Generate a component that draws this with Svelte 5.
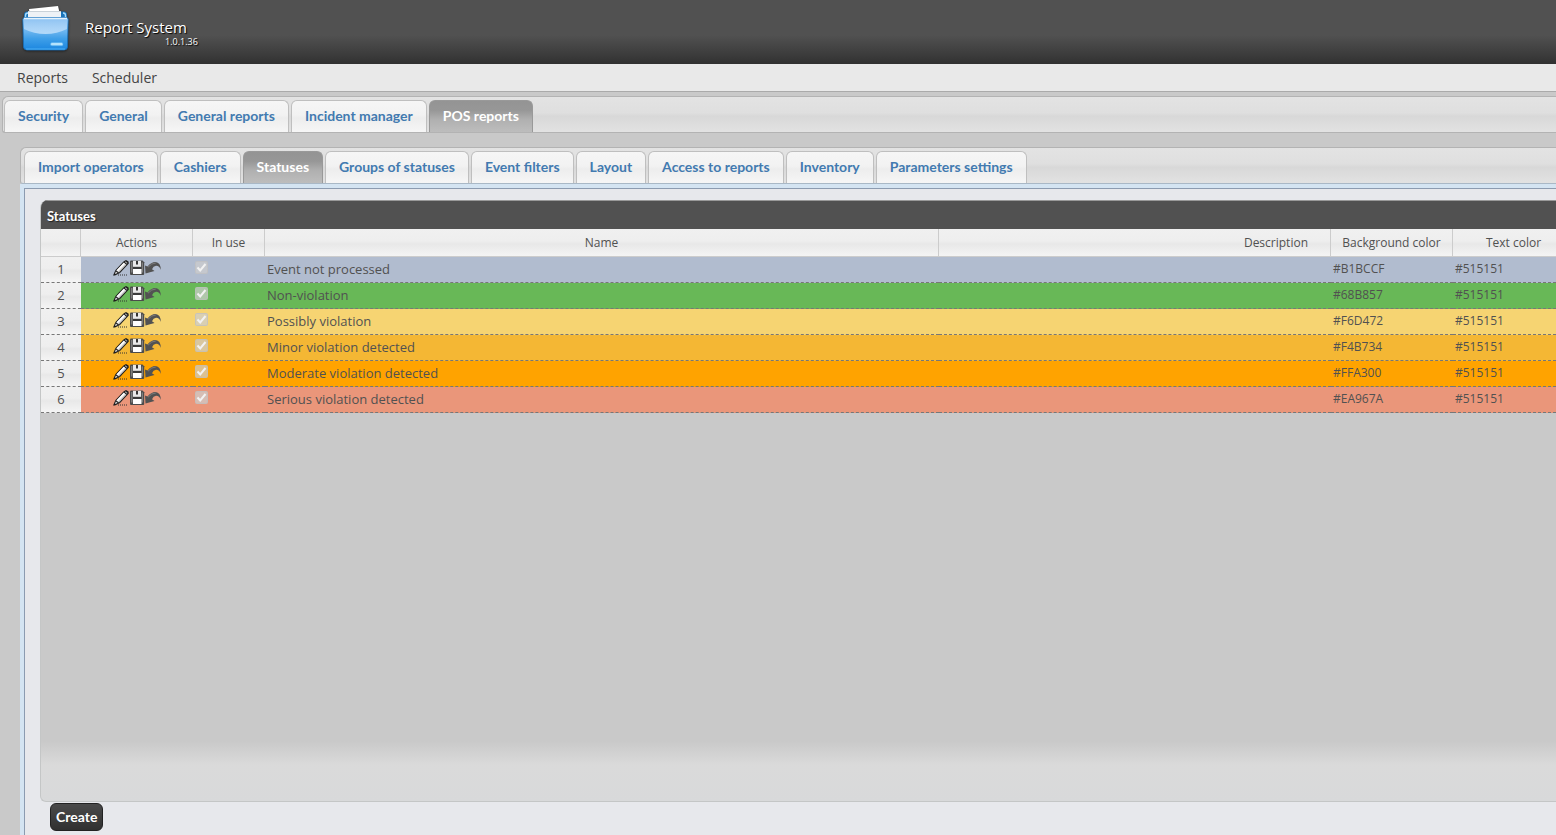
<script>
  const sections = ['Security', 'General', 'General reports', 'Incident manager', 'POS reports'];
  const pages = [
    'Import operators',
    'Cashiers',
    'Statuses',
    'Groups of statuses',
    'Event filters',
    'Layout',
    'Access to reports',
    'Inventory',
    'Parameters settings'
  ];
  let section = $state('POS reports');
  let page = $state('Statuses');

  const statuses = [
    { name: 'Event not processed', background: '#B1BCCF', text: '#515151' },
    { name: 'Non-violation', background: '#68B857', text: '#515151' },
    { name: 'Possibly violation', background: '#F6D472', text: '#515151' },
    { name: 'Minor violation detected', background: '#F4B734', text: '#515151' },
    { name: 'Moderate violation detected', background: '#FFA300', text: '#515151' },
    { name: 'Serious violation detected', background: '#EA967A', text: '#515151' }
  ];
</script>

<div class="app">
  <header>
    <svg class="logo" viewBox="0 0 50 48" aria-hidden="true">
      <defs>
        <linearGradient id="folder" x1="0" y1="0" x2="0" y2="1">
          <stop offset="0" stop-color="#9fcff7" />
          <stop offset="0.45" stop-color="#66b2ee" />
          <stop offset="0.65" stop-color="#3f9fe8" />
          <stop offset="1" stop-color="#1b86e0" />
        </linearGradient>
        <linearGradient id="gloss" x1="0" y1="0" x2="0" y2="1">
          <stop offset="0" stop-color="#8fc3f2" />
          <stop offset="1" stop-color="#c2e1fb" stop-opacity="0.85" />
        </linearGradient>
      </defs>
      <path d="M3 14V9q0-3.500 3-3.500H43q3 0 3 3.500v5z" fill="#1974ba" />
      <path d="M4.500 11V9.500q0-2.500 2.500-2.500M44.500 11V9.500q0-2.500-2.500-2.500" fill="none" stroke="#a6dafc" stroke-width="1.400" />
      <path d="M8 5 37 2 39 12H9z" fill="#cfd6db" />
      <path d="M8 3 37 0 39 9 9 12z" fill="#fff" />
      <path d="M7 5.500h33v8H7z" fill="#eef2f6" />
      <path d="M7 5.500h33" stroke="#c9d2d9" stroke-width="1" />
      <path d="M3.500 11.500H45.500Q47.200 11.500 47.200 13.500L46.500 41Q46.300 44 43 44H6Q2.800 44 2.500 41L1.800 13.500Q1.800 11.500 3.500 11.500z" fill="url(#folder)" stroke="#1670bd" stroke-width="0.800" />
      <path d="M2.800 13H46.200L45.900 23Q36 28 24.500 28T3 23z" fill="url(#gloss)" />
      <path d="M3 12.500H46" stroke="#e4f3fe" stroke-width="1.500" />
      <path d="M5 43H44" stroke="#4cb1f5" stroke-width="1.200" />
      <rect x="29.500" y="36.500" width="12.500" height="3.200" rx="1.500" fill="#b5e3fd" stroke="#49a9ee" stroke-width="0.600" />
    </svg>
    <div class="brand">
      <span class="title">Report System</span>
      <span class="version">1.0.1.36</span>
    </div>
  </header>

  <nav class="menu">
    <a href="#reports">Reports</a>
    <a href="#scheduler">Scheduler</a>
  </nav>

  <main>
    <div class="tabs outer" role="tablist">
      {#each sections as s}
        <button role="tab" class:active={s === section} aria-selected={s === section} onclick={() => (section = s)}>{s}</button>
      {/each}
    </div>

    <div class="workspace">
      <div class="tabs inner" role="tablist">
        {#each pages as p}
          <button role="tab" class:active={p === page} aria-selected={p === page} onclick={() => (page = p)}>{p}</button>
        {/each}
      </div>

      <div class="frame">
        <section class="panel">
          <div class="grid">
            <h2>Statuses</h2>
            <table>
              <colgroup>
                <col class="c-num" /><col class="c-act" /><col class="c-use" /><col class="c-name" /><col /><col class="c-bg" /><col class="c-text" />
              </colgroup>
              <thead>
                <tr>
                  <th></th>
                  <th>Actions</th>
                  <th>In use</th>
                  <th>Name</th>
                  <th class="desc">Description</th>
                  <th>Background color</th>
                  <th class="last">Text color</th>
                </tr>
              </thead>
              <tbody>
                {#each statuses as row, i}
                  <tr style="background-color: {row.background}; color: {row.text}">
                    <th scope="row">{i + 1}</th>
                    <td>
                      <div class="actions">
                        <button aria-label="Edit">
                          <svg viewBox="0 0 16 16">
                            <path d="M5 15h10" stroke="#333" stroke-dasharray="1 1" />
                            <path d="M0 15.500 2.500 10 10.500 1.500 13 0 15.500 1.500 15.800 3.500 7 13 2 15.500z" fill="#1c1c1c" />
                            <path d="M3.300 10.500 10.800 2.600 13.300 4.800 6 12.500z" fill="#e9e9e9" />
                            <path d="M4.200 10.600 11.200 3.400" stroke="#fff" stroke-width="1.200" />
                            <path d="M5.800 12 12.900 4.600" stroke="#8a8a8a" stroke-width="0.800" />
                            <path d="M12.200 1.700 14.200 3.400" stroke="#a8a8a8" stroke-width="1.200" />
                            <path d="M1.800 14 2.900 11.500 4.700 13z" fill="#e2e2e2" />
                          </svg>
                        </button>
                        <button aria-label="Save">
                          <svg viewBox="0 0 16 16">
                            <path d="M2 .5H13.500L15.200 2.200V14Q15.200 15 14.200 15H2Q1 15 1 14V1.500Q1 .5 2 .5z" fill="#4c4c4c" />
                            <path d="M2 2h1.500v10.500H2zM12.700 2.500h1.300v10h-1.300z" fill="#7e7e7e" />
                            <path d="M4 .8h8v6H4z" fill="#e9e9e9" />
                            <path d="M7 1h2v3.500H7z" fill="#333" />
                            <path d="M4 9h8.500v5H4z" fill="#fff" />
                            <path d="M4 8h8.500" stroke="#2a2a2a" />
                          </svg>
                        </button>
                        <button aria-label="Undo">
                          <svg viewBox="0 0 16 16">
                            <path d="M0 5.500 2.500 6.500Q6 2 10.500 2 15.800 2.600 15.800 10 14.300 5.600 11 5.800 8.200 6.200 7 9.200L9.500 11 .5 13.500z" fill="#525252" />
                            <path d="M3 7.200Q6.500 3 10.800 3" fill="none" stroke="#858585" stroke-width="0.800" />
                          </svg>
                        </button>
                      </div>
                    </td>
                    <td class="use">
                      <input type="checkbox" checked disabled aria-label="{row.name} in use" />
                    </td>
                    <td>{row.name}</td>
                    <td></td>
                    <td class="hex">{row.background}</td>
                    <td class="hex">{row.text}</td>
                  </tr>
                {/each}
              </tbody>
            </table>
          </div>
          <button class="create">Create</button>
        </section>
      </div>
    </div>
  </main>
</div>

<style>
  :global(body) {
    margin: 0;
    background: #c9c9c9;
  }
  .app {
    min-height: 100vh;
    display: flex;
    flex-direction: column;
    font: 13px/20px 'Open Sans', sans-serif;
    color: #515151;
    overflow: hidden;
  }
  button {
    font: inherit;
    margin: 0;
    cursor: pointer;
  }
  header {
    height: 64px;
    box-sizing: border-box;
    display: flex;
    align-items: flex-start;
    gap: 14px;
    padding: 6px 21px;
    background: linear-gradient(#515151 0, #515151 55%, #3a3a3a 88%, #303030 100%);
  }
  .logo {
    width: 50px;
    height: 48px;
    flex: none;
    filter: drop-shadow(0 1px 1px #222);
  }
  .brand {
    display: flex;
    flex-direction: column;
    color: #fff;
    text-shadow: 1px 1px 1px #000;
    padding-top: 11px;
  }
  .title {
    font-size: 15px;
    line-height: 20px;
  }
  .version {
    font-size: 9px;
    line-height: 10px;
    padding-left: 80px;
  }
  .menu {
    display: flex;
    gap: 24px;
    padding: 4px 17px 3px;
    background: #e9e9e9;
    border-bottom: 1px solid #aaa;
  }
  .menu a {
    font-size: 14px;
    line-height: 20px;
    color: #444;
    text-decoration: none;
  }
  main,
  .workspace {
    flex: 1;
    display: flex;
    flex-direction: column;
  }
  main {
    padding: 4px 0 0 2px;
  }
  .workspace {
    padding: 14px 0 0 18px;
  }
  .tabs {
    display: flex;
    gap: 2px;
    border: solid #b3b3b3;
    border-width: 1px 0 1px 1px;
    border-radius: 6px 0 0 3px;
    padding: 3px 0 0 1px;
    background: linear-gradient(#e3e3e3 0, #dfdfdf 45%, #d8d8d8 55%, #e2e2e2 100%);
  }
  .tabs.inner {
    padding-left: 3px;
    border-bottom-color: #a9b8c6;
  }
  .tabs button {
    font: bold 14px/20px Lato, sans-serif;
    color: #427ab0;
    padding: 5px 13px 6px;
    border: 1px solid #bfbfbf;
    border-bottom: 0;
    border-radius: 6px 6px 0 0;
    background: linear-gradient(#f6f6f6 0, #f2f2f2 45%, #ededed 55%, #f6f6f6 100%);
    white-space: nowrap;
  }
  .tabs button.active {
    color: #fff;
    border-color: #999;
    background: linear-gradient(#949494 0, #979797 30%, #b0b0b0 60%, #bdbdbd 100%);
  }
  .frame {
    flex: 1;
    display: flex;
    padding: 4px 0 0 4px;
    background: #d4e4f2;
  }
  .panel {
    flex: 1;
    min-width: 0;
    display: flex;
    flex-direction: column;
    align-items: flex-start;
    gap: 1px;
    padding: 11px 0 4px 15px;
    border: solid #8c9bb0;
    border-width: 1px 0 0 1px;
    background: #e7e8ec;
  }
  .grid {
    flex: 1;
    align-self: stretch;
    border: solid #c4c6c6;
    border-width: 0 0 1px 1px;
    border-radius: 8px 0 0 6px;
    overflow: hidden;
    background: linear-gradient(to top, #d8d9da 0, #dadada 36px, #c9c9c9 60px);
  }
  h2 {
    margin: 0;
    padding: 5px 6px 3px;
    border-top: 1px solid #999;
    font: bold 13px/20px Lato, sans-serif;
    color: #fff;
    background: #515151;
    text-shadow: 1px 1px 1px #222;
  }
  table {
    width: 100%;
    table-layout: fixed;
    border-collapse: separate;
    border-spacing: 0;
  }
  .c-num { width: 40px; }
  .c-act { width: 112px; }
  .c-use { width: 72px; }
  .c-name { width: 44.5%; }
  .c-bg { width: 122px; }
  .c-text { width: 103px; }
  th {
    font-weight: 400;
    color: #515151;
    background: linear-gradient(#f0f0f0 0, #eeeeee 45%, #e8e8e8 55%, #f4f4f4 100%);
  }
  th,
  td {
    box-sizing: border-box;
    padding: 0 2px;
  }
  thead th {
    height: 28px;
    font-size: 12px;
    border: solid #ccc;
    border-width: 0 1px 1px 0;
  }
  thead th.desc {
    text-align: right;
    padding-right: 22px;
  }
  thead th.last {
    padding-left: 20px;
    border-right: 0;
  }
  tbody th,
  td {
    height: 26px;
    padding-bottom: 2px;
    border-bottom: 1px dashed #777;
  }
  .hex {
    font-size: 12px;
  }
  .actions {
    display: flex;
    justify-content: center;
    padding-bottom: 2px;
  }
  .actions button {
    padding: 0;
    border: 0;
    background: none;
    height: 16px;
  }
  .actions svg {
    display: block;
    width: 16px;
    height: 16px;
  }
  .use {
    line-height: 0;
    padding-bottom: 4px;
  }
  input {
    appearance: none;
    display: block;
    width: 13px;
    height: 13px;
    margin: 0;
    border: 1px solid rgba(190, 190, 190, 0.6);
    border-radius: 2px;
    background: rgba(205, 205, 205, 0.7)
      url("data:image/svg+xml,%3Csvg xmlns='http://www.w3.org/2000/svg' viewBox='0 0 11 11'%3E%3Cpath d='M1.500 5.500 4.200 8.500 9.500 2' fill='none' stroke='%23f2f2f2' stroke-width='2'/%3E%3C/svg%3E");
  }
  .create {
    margin-left: 10px;
    padding: 3px 5px;
    border: 1px solid #222;
    border-radius: 6px;
    font: bold 14px/20px Lato, sans-serif;
    color: #fff;
    background: linear-gradient(#4a4a4a, #303030);
  }
</style>
